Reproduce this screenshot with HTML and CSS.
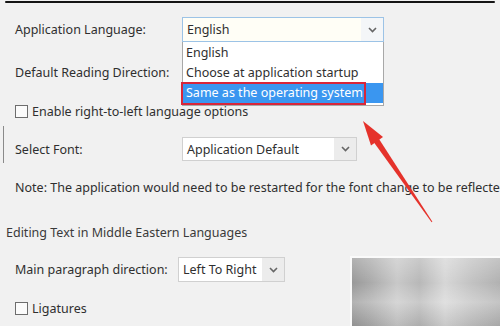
FILE: index.html
```html
<!DOCTYPE html>
<html lang="en">
<head>
    <meta charset="UTF-8">
    <meta name="viewport" content="width=device-width, initial-scale=1.0">
    <title>Language Preferences</title>
    <link rel="stylesheet" href="styles.css">
</head>
<body>
    <div class="dialog">
        <div class="topline"></div>

        <div class="content">
            <div class="row row-lang">
                <span class="label">Application Language:</span>
                <div class="select select-open">
                    <span class="value">English</span>
                    <span class="chev"><svg width="9" height="6" viewBox="0 0 9 6"><path d="M1 1 L4.5 4.5 L8 1" fill="none" stroke="#666" stroke-width="1.6"/></svg></span>
                    <ul class="options">
                        <li>English</li>
                        <li>Choose at application startup</li>
                        <li class="selected">Same as the operating system</li>
                    </ul>
                </div>
            </div>

            <div class="row row-dir">
                <span class="label">Default Reading Direction:</span>
            </div>

            <label class="check row-rtl"><span class="box"></span>Enable right-to-left language options</label>

            <div class="row row-font">
                <span class="label">Select Font:</span>
                <div class="select select-font">
                    <span class="value">Application Default</span>
                    <span class="chev"><svg width="9" height="6" viewBox="0 0 9 6"><path d="M1 1 L4.5 4.5 L8 1" fill="none" stroke="#666" stroke-width="1.6"/></svg></span>
                </div>
            </div>

            <p class="note">Note: The application would need to be restarted for the font change to be reflected.</p>
        </div>

        <h3 class="section">Editing Text in Middle Eastern Languages</h3>

        <div class="content">
            <div class="row row-para">
                <span class="label label-para">Main paragraph direction:</span>
                <div class="select select-para">
                    <span class="value">Left To Right</span>
                    <span class="chev"><svg width="9" height="6" viewBox="0 0 9 6"><path d="M1 1 L4.5 4.5 L8 1" fill="none" stroke="#666" stroke-width="1.6"/></svg></span>
                </div>
            </div>

            <label class="check row-lig"><span class="box"></span>Ligatures</label>
        </div>

        <!-- red annotation arrow pointing at the selected option -->
        <svg class="arrow" width="500" height="326" viewBox="0 0 500 326">
            <polygon points="379,138 374,141.4 431.6,221.3 432.4,220.7" fill="#e5322b"/>
            <polygon points="363,120 383,136 371,144.5" fill="#e5322b"/>
        </svg>

        <div class="watermark"></div>
    </div>
</body>
</html>
```

FILE: styles.css
```css
html, body {
    margin: 0;
    padding: 0;
}
body {
    width: 500px;
    height: 326px;
    overflow: hidden;
    background-color: #f1f1f1;
    font-family: "Noto Sans", "Open Sans", sans-serif;
    font-size: 12.5px;
    color: #2f2f2f;
}
.dialog {
    position: relative;
    width: 500px;
    height: 326px;
}
.dialog::before {
    content: "";
    position: absolute;
    left: 3px;
    top: 125px;
    width: 1px;
    height: 37px;
    background: #8a8a8a;
}
.topline {
    height: 2px;
    margin: 1px 5px 0;
    background: #151515;
    border-radius: 1px;
}
.content {
    padding-left: 15px;
}
.row {
    display: flex;
    align-items: center;
    height: 25px;
}
.label {
    width: 167px;
    flex-shrink: 0;
    white-space: nowrap;
}
.label-para {
    width: 163px;
}
.row-lang {
    margin-top: 14px;
}
.row-dir {
    margin-top: 18px;
}
.row-font {
    margin-top: 19px;
    height: 24px;
}
.row-para {
    margin-top: 16px;
}

/* combo boxes */
.select {
    position: relative;
    display: flex;
    align-items: center;
    height: 100%;
    box-sizing: border-box;
    border: 1px solid #d0d0d0;
    background: #fff;
    padding-left: 4px;
}
.select .value {
    flex: 1;
    white-space: nowrap;
}
.select .chev {
    display: flex;
    align-items: center;
    justify-content: center;
    width: 22px;
    height: 100%;
    background: #ececec;
}
.select-open {
    width: 202px;
    border-color: #9cc3e6;
    background: #fffef6;
}
.select-open .chev {
    background: #f4f6f8;
}
.select-font {
    width: 175px;
}
.select-para {
    width: 107px;
}
.options {
    position: absolute;
    left: -1px;
    right: -1px;
    top: 24px;
    margin: 0;
    padding: 1px 0 2px;
    list-style: none;
    background: #fff;
    border: 1px solid #a8a8a8;
    border-top: none;
    z-index: 2;
}
.options li {
    height: 20px;
    line-height: 20px;
    padding-left: 3px;
    white-space: nowrap;
}
.options .selected {
    position: relative;
    background: #3a96f0;
    color: #fff;
}
.options .selected::after {
    content: "";
    position: absolute;
    left: -2px;
    top: -1px;
    width: 185px;
    height: 23px;
    box-sizing: border-box;
    border: 2px solid #d8263a;
}

/* checkboxes */
.check {
    display: flex;
    align-items: center;
    height: 13px;
    white-space: nowrap;
}
.check .box {
    width: 13px;
    height: 13px;
    box-sizing: border-box;
    border: 1px solid #6d6d6d;
    background: #fbfbfb;
    margin-right: 4px;
}
.row-rtl {
    margin-top: 20px;
}
.row-lig {
    margin-top: 20px;
}

.note {
    margin: 19px 0 0;
    line-height: 16px;
    white-space: nowrap;
}
.section {
    margin: 29px 0 0 6px;
    font-size: 12.5px;
    font-weight: normal;
    line-height: 16px;
    color: #3a3a3a;
}

.arrow {
    position: absolute;
    left: 0;
    top: 0;
    z-index: 3;
}
.watermark {
    position: absolute;
    left: 350px;
    top: 255px;
    width: 150px;
    height: 71px;
    border-top: 2px solid #fafafa;
    border-left: 2px solid #fafafa;
    background:
        linear-gradient(180deg, rgba(255,255,255,0.25) 0%, rgba(255,255,255,0) 35%, rgba(255,255,255,0.25) 62%, rgba(0,0,0,0.08) 100%),
        linear-gradient(90deg, #999 0%, #aaa 12%, #c8c8c8 30%, #b8b8b8 45%, #d6d6d6 62%, #c2c2c2 80%, #b0b0b0 100%);
}
```
